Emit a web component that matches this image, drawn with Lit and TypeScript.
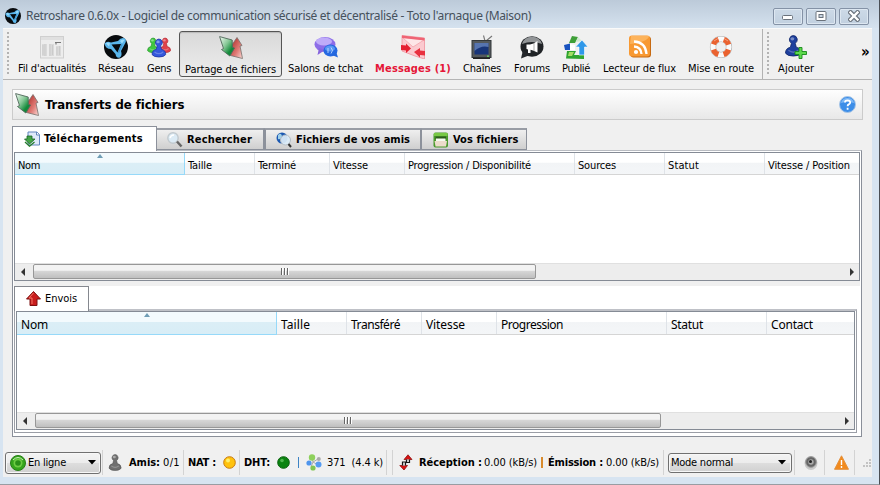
import { LitElement, html, css, svg, TemplateResult } from "lit";
import { customElement } from "lit/decorators.js";

const TAHOMA = '"DejaVu Sans Condensed", "DejaVu Sans", sans-serif';
const SEGOE = '"Noto Sans", "Open Sans", sans-serif';
const FONTS: Record<string, string> = {
  ui: `11px ${TAHOMA}`,
  uib: `bold 11px ${TAHOMA}`,
  head: `bold 13px ${TAHOMA}`,
  more: `bold 15px ${TAHOMA}`,
  title: `12px ${SEGOE}`,
  grid: `12px ${SEGOE}`,
};

const ctx = document.createElement("canvas").getContext("2d")!;

/** Text run tracked so that it occupies the given width. */
function label(text: string, width: number, kind = "ui") {
  ctx.font = FONTS[kind];
  const gap = (width - ctx.measureText(text).width) / text.length;
  return html`<span class="t ${kind}" style="letter-spacing:${gap.toFixed(3)}px">${text}</span>`;
}

const pic = (w: number, h: number, body: TemplateResult | any, vw = w, vh = h) =>
  html`<svg width=${w} height=${h} viewBox="0 0 ${vw} ${vh}">${body}</svg>`;

const logo = svg`
  <circle cx="12" cy="12" r="12" fill="#080b0e"/>
  <path d="M.5 8.500Q3 5.500 7 7.500L14 6Q17 2 21 3.500Q23 6 20.500 9.500L17 16Q18.500 20.500 16 22.500Q12 23.500 11.500 19L7 14Q1.500 14 .5 8.500z" fill="#5ab6ec"/>
  <path d="M2 8.500Q4 6.500 6 8.500L5 11.500zM16 6Q18 3.500 20.500 5L18 8.500z" fill="#9bdcfb"/>
  <path d="M7.500 9.500L17 9L13.500 17.500z" fill="#06090c"/>
  <path d="M18 8L18.500 10L15 18L13.800 17.500z" fill="#3d93cc"/>`;

const share = svg`
  <defs>
    <linearGradient id="sg" x2="1" y2="1"><stop offset="0" stop-color="#f4faf4"/><stop offset=".42" stop-color="#86c896"/><stop offset=".72" stop-color="#128a3a"/></linearGradient>
    <linearGradient id="sr" x2="1" y2="1"><stop offset=".2" stop-color="#b8403c"/><stop offset=".6" stop-color="#e07b76"/><stop offset="1" stop-color="#fbdcd8"/></linearGradient>
  </defs>
  <path d="M18 1.500L23 9.500L21 10L23.500 22.500L11.500 19.500L13.500 10L12.500 9.500z" fill="url(#sr)" stroke="#77706c" stroke-width=".8" stroke-linejoin="round"/>
  <path d="M.6 .6L13.200 4L13.400 11.500L15.500 12L10.800 20L2.500 13.500L4.500 12.500z" fill="url(#sg)" stroke="#50685a" stroke-width=".9" stroke-linejoin="round"/>`;

const pawn = (x: number, y: number, s: number, c: string, d: string) => svg`
  <g transform="translate(${x} ${y}) scale(${s})">
    <path d="M0 18Q0 13 5 12L6 8Q3.500 6 4 3.500Q5 0 8 0Q11 0 12 3.500Q12.500 6 10 8L11 12Q16 13 16 18Q14 21 8 21Q2 21 0 18z" fill="${c}" stroke="${d}" stroke-width=".8"/>
    <ellipse cx="7" cy="3.400" rx="2" ry="1.600" fill="#fff" opacity=".4"/><path d="M3 15Q8 19 13 15" stroke="#fff" stroke-width="1.500" opacity=".25" fill="none"/>
  </g>`;

const icons = {
  news: svg`<rect x=".5" y="1.500" width="23" height="21.500" fill="#ededed" stroke="#cfcfcf"/><rect x="1" y="2" width="22" height="3" fill="#e0e0e0"/>
    <path d="M2 9h5v12h-5zM9 9h5v12h-5zM16 11h5v10h-5z" fill="#dadada"/><path d="M3 10v10M5 9v12M10 9v12M12.500 10v10M17 12v8M19.500 11v9" stroke="#c4c4c4" stroke-width=".7"/><path d="M15 7.500h6M16 8v1.500" stroke="#777" stroke-width="1.200"/>`,
  logo,
  people: svg`${pawn(0.5, 3, 0.7, "#3fc63f", "#1b8a20")}${pawn(12.5, 3, 0.7, "#e0404a", "#a81f2a")}${pawn(5, 4, 0.86, "#3457dc", "#1a2f9c")}`,
  share,
  chat: svg`<ellipse cx="11" cy="9.500" rx="10.500" ry="7.500" fill="#8d6de8"/><path d="M5 13L3.500 20L11 15z" fill="#8665dd"/><ellipse cx="10" cy="6.500" rx="8" ry="4" fill="#d0c0ff" opacity=".75"/>
    <ellipse cx="16.500" cy="15.500" rx="7" ry="6" fill="#2569e2"/><path d="M18 20l6 2.500-2-6z" fill="#2467dc"/><ellipse cx="16" cy="13.500" rx="5" ry="3" fill="#7db5ff" opacity=".6"/><path d="M14 13v5M17 12.500q3 3 0 6" stroke="#cfe4ff" fill="none" stroke-width=".8"/>`,
  mail: svg`<path d="M1 .5L23.500 3V24L14 21L1 16z" fill="#fbc9cf" stroke="#f0929d" stroke-width=".8"/><path d="M2 3L12 12L23 5" fill="#fde6e8" stroke="#f3a3ac" stroke-width=".8"/><path d="M1 .5L23.500 3V5.500L1 3z" fill="#ef6474"/>
    <path d="M0 10L5 10.500V8.500L10 13.500L5 18V15.500L0 15z" fill="#e51f32"/><path d="M24 16L19 15.500V13L13 17L19 22.500V20L24 20.500z" fill="#e8303f"/>`,
  tv: svg`<path d="M15 6L13.500 .5M16 6L22 1" stroke="#777" stroke-width="1.100"/><rect x="2" y="5.500" width="19" height="17" fill="#54595c" stroke="#33383b"/><rect x="4.500" y="8" width="14" height="11.500" fill="#183579"/><path d="M4.500 8H18.500V12Q11 10 4.500 16z" fill="#6684bd" opacity=".8"/><path d="M3 22.500h17v1.500h-17z" fill="#222"/><circle cx="18" cy="21.200" r=".9" fill="#6edb61"/>`,
  forum: svg`<ellipse cx="12" cy="11.500" rx="11.500" ry="10.300" fill="#202326"/><path d="M3 15L1 23.500L10 20z" fill="#25282b"/><path d="M2 9Q4 2 12 1.800Q20 2 22 9Q12 5 2 9z" fill="#b8bcbe" opacity=".75"/><path d="M6.500 9.500L10 9.500L13.500 8.500L17.500 6V17.500L13 15.500L10.500 14.800V18H8V14.500L6.500 14z" fill="#fff"/><path d="M14 8v8" stroke="#777" stroke-width=".6"/>`,
  posted: svg`<path d="M8 1L14 2L11 8L5 8z" fill="#3e9f38"/><path d="M14 2L12 7L18 6z" fill="#cfe9d0"/><path d="M0 10L6 8.500V15L1 15z" fill="#1853bf"/><path d="M6 9L11 10V15L6 15z" fill="#fff"/><path d="M3 16L12 16L10 20H20V24L2 23.500z" fill="#2fa42f"/><path d="M5 17L10 17L8 21L4 21z" fill="#a4dd65"/><path d="M18 5L24 12H20.500V20H15V12H11.500z" fill="#2f98e9" stroke="#fff" stroke-width=".6"/>`,
  rss: svg`<rect x="2.500" y="1.500" width="20.500" height="21" rx="3" fill="#c76a12"/><rect x="1" y=".5" width="21" height="21" rx="3" fill="#f89932"/><path d="M3 1H21Q20 7 2 9z" fill="#ffc271" opacity=".65"/>
    <circle cx="8" cy="17" r="2.100" fill="#fff"/><path d="M6 11.500Q13 12 13.500 19M6 6.500Q17.500 7 18.500 19" stroke="#fff" stroke-width="2.300" fill="none"/>`,
  ring: svg`<circle cx="12" cy="12" r="8" fill="none" stroke="#aaa" stroke-width="6.200"/><circle cx="12" cy="12" r="8" fill="none" stroke="#fafafa" stroke-width="5.200"/><circle cx="12" cy="12" r="8" fill="none" stroke="#ea6230" stroke-width="5.200" stroke-dasharray="7.200 5.366" stroke-dashoffset="-2.600"/><path d="M5 6Q12 0 19 6" stroke="#fff" stroke-width="1" fill="none" opacity=".4"/>`,
  add: svg`${pawn(1.5, 0.5, 0.98, "#1d3f9e", "#0d2367")}<path d="M15 12.500h3v4h4.500V19.500h-4.500v4h-3v-4h-4v-3h4z" fill="#5ed94d" stroke="#16881a" stroke-width=".9"/>`,
};

interface Tool { icon: keyof typeof icons; text: string; w: number; cls?: string }
const tools: Tool[] = [
  { icon: "news", text: "Fil d'actualités", w: 68 },
  { icon: "logo", text: "Réseau", w: 36 },
  { icon: "people", text: "Gens", w: 24, cls: "g1" },
  { icon: "share", text: "Partage de fichiers", w: 91, cls: "on" },
  { icon: "chat", text: "Salons de tchat", w: 75 },
  { icon: "mail", text: "Messages (1)", w: 76, cls: "alert" },
  { icon: "tv", text: "Chaînes", w: 38 },
  { icon: "forum", text: "Forums", w: 36, cls: "g1" },
  { icon: "posted", text: "Publié", w: 28 },
  { icon: "rss", text: "Lecteur de flux", w: 73, cls: "g1" },
  { icon: "ring", text: "Mise en route", w: 66 },
];

const tabs = [
  { text: "Téléchargements", w: 99, icon: svg`<path d="M4 1H13L15.500 3.500V14H4z" fill="#dfe9fa" stroke="#6286bd"/><path d="M12.500 1V4H15.500" fill="#fff" stroke="#6286bd"/><path d="M3 5H8V8H11L5.500 13L.5 8H3z" fill="#45a447" stroke="#176623" stroke-width=".8"/><path d="M1 11L5.500 15.200L10.500 11" fill="none" stroke="#257c2c" stroke-width="1.300"/>` },
  { text: "Rechercher", w: 65, icon: svg`<circle cx="6" cy="6" r="5.200" fill="#dcebf5" stroke="#c1c9ce" stroke-width="1.400"/><path d="M3 6Q4 3 7 3" stroke="#fff" fill="none" stroke-width="1.500"/><path d="M10 9.500L14.500 14.500" stroke="#666" stroke-width="2.500"/>` },
  { text: "Fichiers de vos amis", w: 114, icon: svg`<circle cx="6" cy="6" r="5.500" fill="#1c59b2"/><path d="M2 3Q5 0 6 4Q5 8 2 7z" fill="#9fd0e9"/><circle cx="9.500" cy="8" r="5" fill="#dcecf7" fill-opacity=".93" stroke="#b4bdc5"/><path d="M12.500 12L15 15" stroke="#333" stroke-width="2"/>` },
  { text: "Vos fichiers", w: 65, icon: svg`<rect x=".5" y=".5" width="14.500" height="15" rx="2" fill="#4a9a2c"/><path d="M1 1H14.500V4H1z" fill="#78c845"/><path d="M2.500 4.500H13V7H2.500z" fill="#2c5c1b"/><path d="M3 6.500H12.500V9H3z" fill="#f5fbf0"/><path d="M1.500 9H14L13 14.500H2.500z" fill="#ecdccb"/>` },
];

const downloads: [string, number][] = [["Nom", 22], ["Taille", 24], ["Terminé", 38], ["Vitesse", 35], ["Progression / Disponibilité", 123], ["Sources", 38], ["Statut", 31], ["Vitesse / Position", 82]];
const uploads: [string, number][] = [["Nom", 27], ["Taille", 29], ["Transféré", 49], ["Vitesse", 39], ["Progression", 62], ["Statut", 32], ["Contact", 42]];

const header = (cols: [string, number][], kind: string, cls: string) => html`
  <div class="header ${cls}">${cols.map(([text, w], i) => html`
    <div class="col ${i ? "" : "sorted"}">${i ? "" : html`<i class="sort"></i>`}${label(text, w, kind)}</div>`)}
  </div>`;

const scroll = () => html`
  <div class="scroll">
    ${pic(4, 8, svg`<path d="M4 0V8L0 4z" fill="#333"/>`)}
    <div class="thumb"><b></b><b></b><b></b></div>
    ${pic(4, 8, svg`<path d="M0 0V8L4 4z" fill="#333"/>`)}
  </div>`;

const arrow = () => pic(8, 5, svg`<path d="M0 0H8L4 4.500z" fill="#000"/>`);

@customElement("app-root")
export class AppRoot extends LitElement {
  static styles = css`
    :host { display: block; width: 880px; height: 485px; overflow: hidden; color: #000; }
    * { box-sizing: border-box; }
    svg { display: block; flex: none; }
    .t { white-space: pre; display: block; flex: none; line-height: 14px; }
    .ui { font: 11px/14px "DejaVu Sans Condensed", "DejaVu Sans", sans-serif; }
    .uib { font: bold 11px/14px "DejaVu Sans Condensed", "DejaVu Sans", sans-serif; }
    .head { font: bold 13px/16px "DejaVu Sans Condensed", "DejaVu Sans", sans-serif; }
    .t.more { font: bold 15px/16px "DejaVu Sans Condensed", "DejaVu Sans", sans-serif; margin: 15px 2px 0 auto; }
    .title, .grid { font: 12px/16px "Noto Sans", "Open Sans", sans-serif; }
    .title { color: #46515c; }

    .window { height: 485px; display: flex; flex-direction: column; background: #d7e4f1; border-right: 1px solid #4b4f55; border-bottom: 1px solid #999da3; }
    .titlebar { height: 28px; flex: none; display: flex; align-items: center; padding: 4px 10px 0 5px; gap: 5px; background: linear-gradient(#bccad9, #d5e2ef); }
    .controls { margin-left: auto; display: flex; gap: 3px; }
    .control { width: 30px; height: 17px; border: 1px solid #8492a6; border-radius: 2px; background: linear-gradient(#cddae7, #c1d0e0); box-shadow: inset 0 0 0 1px #dde7f1; display: grid; place-items: center; }
    .client { margin: 0 7px 7px 3px; flex: 1; min-height: 0; background: #f0f0f0; display: flex; flex-direction: column; }

    .toolbar { height: 52px; flex: none; display: flex; border-bottom: 1px solid #b4b4b4; border-top: 1px solid #fafafa; }
    .handle { width: 2px; height: 44px; margin: 3px 3px 0 4px; background: repeating-linear-gradient(#b3b3b3 0 2px, #f0f0f0 2px 4px); }
    .tool { padding: 6px 6px 0; display: flex; flex-direction: column; align-items: center; gap: 3px; flex: none; }
    .tool.g1 { margin-left: 1px; }
    .tool.on { border: 1px solid #555; border-radius: 3px; background: linear-gradient(#d9d9d9, #ededed); margin: 2px 0 2px 2px; padding: 4px 5px 0; gap: 3px; box-shadow: inset 0 1px 1px #b9b9b9; }
    .alert .t { color: #e51638; }
    .sep { width: 1px; margin-left: 2px; background: #b2b2b2; }

    .banner { margin: 9px 9px 0; height: 31px; flex: none; border: 1px solid #cbcbcb; background: linear-gradient(#fefefe, #e8e8e8); display: flex; align-items: center; padding: 0 6px 0 2px; gap: 6px; }
    .banner svg:last-child { margin-left: auto; }

    .tabs { display: flex; align-items: flex-end; height: 25px; margin: 6px 9px 0; flex: none; position: relative; z-index: 1; }
    .tab { height: 22px; margin-bottom: 1px; display: flex; align-items: center; gap: 4px; border: 1px solid #8c919b; border-top-width: 2px; border-top-color: #999da5; border-left: 0; background: linear-gradient(#efefef, #cfcfcf); padding-left: 10px; }
    .tab.current { width: 145px; height: 25px; margin: 0; background: #fff; border: 1px solid #8c919b; border-bottom: 0; padding-left: 11px; padding-bottom: 1px; }
    .tab.n1 { width: 107px; }
    .tab.n2 { width: 157px; border-left: 2px solid #8c919b; }
    .tab.n3 { width: 106px; border-left: 1px solid #8c919b; padding-left: 11px; gap: 4px; }

    .pane { margin: -1px 10px 0 9px; height: 287px; flex: none; border: 1px solid #8a8f99; border-top-color: #b9bcc2; background: #fff; padding: 1px 1px 3px; display: flex; flex-direction: column; }
    .table { border: 1px solid #858b95; background: #fff; display: flex; flex-direction: column; flex: none; }
    .top { height: 129px; }
    .split { height: 5px; background: #f0f0f0; flex: none; }
    .uptab { width: 75px; height: 25px; flex: none; border: 1px solid #85888f; border-bottom: 0; display: flex; align-items: center; padding: 0 0 1px 11px; gap: 4px; background: #fff; position: relative; z-index: 1; }
    .frame { border: 1px solid #9b9ea6; border-top: 2px solid #bfc1c7; height: 124px; margin: -2px 3px 0 0; padding: 0 1px 2px 1px; }
    .bottom { height: 119px; }

    .header { display: grid; flex: none; height: 22px; border-bottom: 1px solid #d5d5d5; background: linear-gradient(#fff 45%, #f2f4f6 46%, #f4f6f8); }
    .header.down { grid-template-columns: 170px 70px 75px 75px 170px 90px 100px 1fr; }
    .header.up { grid-template-columns: 260px 70px 75px 75px 170px 100px 1fr; height: 23px; }
    .col { border-right: 1px solid #dfe3e8; padding-left: 3px; display: flex; align-items: center; overflow: hidden; padding-top: 4px; height: 21px; }
    .col:last-child { border: 0; }
    .up .col { padding-left: 4px; height: 22px; }
    .header .col.sorted { background: linear-gradient(#f3fafd 45%, #dbeef6 46%, #d8edf6); border-right: 1px solid #96d9f9; position: relative; box-shadow: 0 1px #96d9f9; }
    .sort { position: absolute; top: 1px; left: 50%; margin-left: -3px; border: 3px solid transparent; border-top: 0; border-bottom: 4px solid #6f9db5; }

    .scroll { margin-top: auto; height: 17px; background: #ededed; border-top: 1px solid #e0e0e0; display: flex; align-items: center; padding: 0 5px 0 6px; justify-content: space-between; }
    .thumb { height: 15px; margin-bottom: 1px; border: 1px solid #979797; border-radius: 2px; background: linear-gradient(#f3f3f3 40%, #d5d5d5 50%, #bfbfbf); display: flex; justify-content: center; gap: 1px; padding-top: 3px; margin-left: 8px; margin-right: auto; width: 503px; }
    .bottom .thumb { width: 626px; }
    .thumb b { width: 2px; height: 7px; background: linear-gradient(90deg, #666 50%, #fff 50%); }

    .status { flex: 1; display: grid; align-items: center; justify-items: start; padding: 13px 0 2px 2px;
      grid-template-columns: 97px 6px 21px 34px 20px 5px 35px 16px 5px 33px 21px 8px 21px 59px 6px 7px 20px 65px 57px 7px 58px 57px 5px 126px 10px 20px 10px 20px 9px 1fr; }
    .status > * { min-width: 0; }
    .vs { width: 1px; height: 25px; background: #d3d3d3; }
    .combo { height: 22px; width: 96px; border: 1px solid #707070; border-radius: 3px; background: linear-gradient(#f3f3f3, #ececec 48%, #dedede 50%, #d0d0d0); box-shadow: inset 0 0 0 1px #f7f7f7; display: flex; align-items: center; padding: 0 4px; gap: 2px; }
    .combo svg:last-child { margin-left: auto; }
    .combo.mode { width: 124px; height: 20px; padding: 0 5px 0 2px; }
    .bar { width: 1px; height: 11px; background: #3d83c4; }
    .bar.warm { background: #d98a2b; width: 2px; }
  `;

  render() {
    return html`<div class="window">
      <div class="titlebar">
        ${pic(16, 16, logo, 24, 24)}
        ${label("Retroshare 0.6.0x - Logiciel de communication sécurisé et décentralisé - Toto l'arnaque (Maison)", 505, "title")}
        <div class="controls">
          <div class="control">${pic(12, 12, svg`<rect x=".5" y="5.500" width="10" height="4" rx="1" fill="#fff" stroke="#6a727c"/>`)}</div>
          <div class="control">${pic(12, 12, svg`<rect x="1" y="1.500" width="10" height="9" rx="1" fill="#fff" stroke="#6a727c"/><rect x="4" y="4.500" width="4" height="3" fill="#c8d5e2" stroke="#6a727c"/>`)}</div>
          <div class="control">${pic(12, 12, svg`<path d="M2.500 2.500L9.500 9.500M9.500 2.500L2.500 9.500" stroke="#6a727c" stroke-width="4.600" stroke-linecap="square"/><path d="M2.500 2.500L9.500 9.500M9.500 2.500L2.500 9.500" stroke="#fff" stroke-width="2.400" stroke-linecap="square"/>`)}</div>
        </div>
      </div>
      <div class="client">
        <div class="toolbar">
          <div class="handle"></div>
          ${tools.map((t) => html`<div class="tool ${t.cls ?? ""}">${pic(24, 24, icons[t.icon])}${label(t.text, t.w, t.cls === "alert" ? "uib" : "ui")}</div>`)}
          <div class="sep"></div>
          <div class="handle"></div>
          <div class="tool">${pic(24, 24, icons.add)}${label("Ajouter", 36)}</div>
          ${label("»", 9, "more")}
        </div>

        <div class="banner">
          ${pic(24, 24, share)}
          ${label("Transferts de fichiers", 139, "head")}
          ${pic(17, 17, svg`<circle cx="8.500" cy="8.500" r="8" fill="#3d8ee8" stroke="#a7c5e6"/><path d="M2 7Q3 2 8.500 2Q14 2 15 7Q8 5 2 7z" fill="#a8d4ff" opacity=".6"/><path d="M6 6.500Q6 4.300 8.500 4.300Q11.200 4.300 11.200 6.400Q11.200 7.600 9.700 8.400Q8.600 9 8.600 10.300M8.600 11.800V13.700" stroke="#fff" stroke-width="1.800" fill="none"/>`)}
        </div>

        <div class="tabs">${tabs.map((t, i) => html`<div class="tab ${i ? "n" + i : "current"}">${pic(16, 16, t.icon)}${label(t.text, t.w, "uib")}</div>`)}</div>

        <div class="pane">
          <div class="table top">${header(downloads, "ui", "down")}${scroll()}</div>
          <div class="split"></div>
          <div class="uptab">
            ${pic(15, 15, svg`<path d="M7.500 .5L14.500 8H11V14.500H4V8H.5z" fill="#c91d1d" stroke="#7d1111"/><path d="M7.500 2L3 7H6V13" stroke="#f07868" fill="none"/>`)}
            ${label("Envois", 32)}
          </div>
          <div class="frame"><div class="table bottom">${header(uploads, "grid", "up")}${scroll()}</div></div>
        </div>

        <div class="status">
          <div class="combo">${pic(16, 16, svg`<circle cx="8" cy="8" r="7.500" fill="#36a51d" stroke="#277e16"/><circle cx="8" cy="8" r="4.500" fill="#6ecc44"/><circle cx="8" cy="8" r="2.800" fill="#2a8f18"/><path d="M3 5Q8 0 13 5" stroke="#d0f3bd" fill="none"/>`)}${label("En ligne", 38)}${arrow()}</div>
          <div class="vs"></div>
          ${pic(14, 17, pawn(1, 0.5, 0.76, "#707070", "#555"))}
          ${label("Amis:", 31, "uib")}${label("0/1", 17)}
          <div class="vs"></div>
          ${label("NAT :", 28, "uib")}
          ${pic(13, 13, svg`<circle cx="6.500" cy="6.500" r="5.800" fill="#ffc20d" stroke="#c8790e"/><circle cx="5" cy="4.500" r="2" fill="#fff06d"/>`)}
          <div class="vs"></div>
          ${label("DHT:", 26, "uib")}
          ${pic(13, 13, svg`<circle cx="6.500" cy="6.500" r="5.800" fill="#0b8310" stroke="#08600b"/><circle cx="5" cy="4.500" r="1.800" fill="#4fb74e"/>`)}
          <div class="bar"></div>
          ${pic(16, 17, svg`<path d="M6 4L7 8L5 13M7 8L12 5M7 8L12 11" stroke="#aaa" fill="none"/><circle cx="6" cy="3.500" r="3.200" fill="#8ed05c"/><circle cx="12.800" cy="5" r="2" fill="#aaa"/><circle cx="3" cy="9" r="2.600" fill="#4f95ed"/><circle cx="12.500" cy="10.500" r="3" fill="#559bf2"/><circle cx="7" cy="14" r="2.600" fill="#80c653"/>`)}
          ${label("371  (4.4 k)", 56)}
          <div class="vs"></div><div class="vs"></div>
          ${pic(14, 17, svg`<path d="M9 .8L13 5.500H5zM5 16L.8 11.500H8.500z" fill="#d71414" stroke="#901010" stroke-width=".8"/><path d="M7.500 5.500V8.500H10.500V5.500M3.500 11.500V8H6.500V11.500" fill="#ddd" stroke="#181818" stroke-width="1.200"/>`)}
          ${label("Réception :", 63, "uib")}${label("0.00 (kB/s)", 53)}
          <div class="bar warm"></div>
          ${label("Émission :", 55, "uib")}${label("0.00 (kB/s)", 53)}
          <div class="vs"></div>
          <div class="combo mode">${label("Mode normal", 62)}${arrow()}</div>
          <div class="vs"></div>
          ${pic(14, 16, svg`<ellipse cx="7" cy="8" rx="6.500" ry="7" fill="#c9c9c9"/><circle cx="7" cy="7" r="5.300" fill="#666" stroke="#999"/><circle cx="7" cy="7" r="2.700" fill="#aaa"/><circle cx="6.500" cy="6.500" r="1.500" fill="#222"/>`)}
          <div class="vs"></div>
          ${pic(15, 15, svg`<path d="M7.500 .8L14.500 14.300H.5z" fill="#f28a1c" stroke="#e39240" stroke-linejoin="round"/><path d="M7.500 5V10M7.500 11V13" stroke="#fff" stroke-width="1.400"/>`)}
          <div class="vs"></div>
          ${pic(9, 10, svg`<path d="M6 1h2v2H6zM6 4h2v2H6zM6 7h2v2H6zM3 4h2v2H3zM3 7h2v2H3zM0 7h2v2H0z" fill="#c3c3c3"/>`)}
        </div>
      </div>
    </div>`;
  }
}
